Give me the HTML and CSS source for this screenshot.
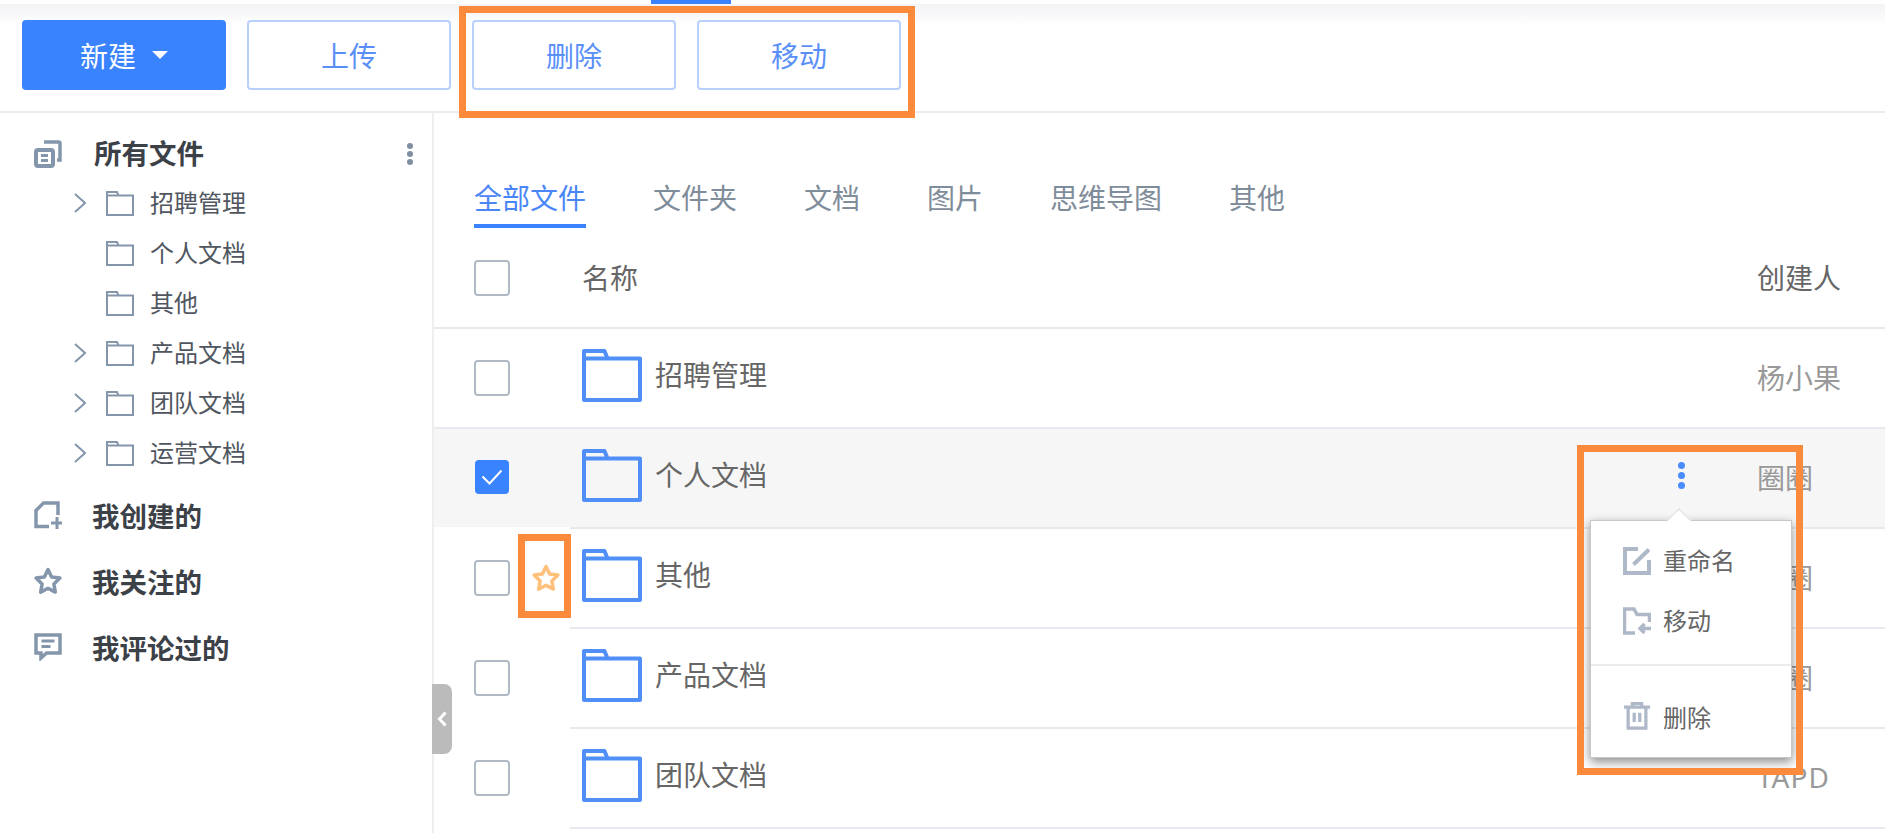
FILE: index.html
```html
<!DOCTYPE html>
<html lang="zh-CN">
<head>
  <meta charset="UTF-8">
  <title>文件</title>
  <link rel="stylesheet" href="styles.css">
</head>
<body>
  <svg class="icon-defs" width="0" height="0">
    <symbol id="folder-big" viewBox="0 0 60 53">
      <path d="M2 2h20.5l3 7.5H58V51H2zM2 9.5h24" fill="none" stroke="currentColor" stroke-width="4" stroke-linejoin="round"/>
    </symbol>
    <symbol id="folder-small" viewBox="0 0 28 25">
      <path d="M1 1h10l1.5 3.5H27V24H1zM1 4.5h12" fill="none" stroke="currentColor" stroke-width="2"/>
    </symbol>
    <symbol id="chevron" viewBox="0 0 12 20">
      <path d="M1 1l10 9-10 9" fill="none" stroke="currentColor" stroke-width="2"/>
    </symbol>
    <symbol id="star" viewBox="0 0 28 28">
      <path d="M14 2.5L17.6 10L25.9 11.1L19.9 16.9L21.3 25.1L14 21.2L6.7 25.1L8.1 16.9L2.1 11.1L10.4 10Z" fill="none" stroke="currentColor" stroke-width="3.5" stroke-linejoin="round"/>
    </symbol>
  </svg>

  <header class="toolbar">
    <span class="toolbar-tab"></span>
    <button class="btn btn-primary">新建<span class="caret"></span></button>
    <button class="btn">上传</button>
    <button class="btn">删除</button>
    <button class="btn">移动</button>
    <span class="mark mark-toolbar"></span>
  </header>

  <div class="main">
    <aside class="sidebar">
      <div class="side-row side-head">
        <svg class="side-icon" viewBox="0 0 28 28" fill="none" stroke="currentColor" stroke-width="4">
          <rect x="2" y="10" width="17" height="16" rx="2"/>
          <path d="M7 15.5h7M7 20.5h7" stroke-width="3"/>
          <path d="M10 2h14.5a1.5 1.5 0 0 1 1.5 1.5V20h-3" stroke-width="3.5"/>
        </svg>
        <span>所有文件</span>
        <span class="side-more"><i></i><i></i><i></i></span>
      </div>

      <ul class="tree">
        <li><svg class="tree-arrow"><use href="#chevron"/></svg><svg class="tree-folder"><use href="#folder-small"/></svg>招聘管理</li>
        <li><svg class="tree-folder"><use href="#folder-small"/></svg>个人文档</li>
        <li><svg class="tree-folder"><use href="#folder-small"/></svg>其他</li>
        <li><svg class="tree-arrow"><use href="#chevron"/></svg><svg class="tree-folder"><use href="#folder-small"/></svg>产品文档</li>
        <li><svg class="tree-arrow"><use href="#chevron"/></svg><svg class="tree-folder"><use href="#folder-small"/></svg>团队文档</li>
        <li><svg class="tree-arrow"><use href="#chevron"/></svg><svg class="tree-folder"><use href="#folder-small"/></svg>运营文档</li>
      </ul>

      <div class="side-links">
        <div class="side-row">
          <svg class="side-icon" viewBox="0 0 28 28" fill="none" stroke="currentColor" stroke-width="3.5">
            <path d="M24 14V2H9.5L2 9.5V25.5H15"/>
            <path d="M23 16v12M17 22h11" stroke-width="3"/>
          </svg>
          <span>我创建的</span>
        </div>
        <div class="side-row">
          <svg class="side-icon"><use href="#star"/></svg>
          <span>我关注的</span>
        </div>
        <div class="side-row">
          <svg class="side-icon" viewBox="0 0 28 28" fill="none" stroke="currentColor" stroke-width="3.5">
            <path d="M2 2H26V20H12.5L7 25V20H2Z"/>
            <path d="M7.5 8h13M7.5 13.5h9" stroke-width="3"/>
          </svg>
          <span>我评论过的</span>
        </div>
      </div>

      <span class="collapse">
        <svg width="10" height="16" viewBox="0 0 10 16"><path d="M8.5 1.5L2.5 8l6 6.5" fill="none" stroke="#fff" stroke-width="3"/></svg>
      </span>
    </aside>

    <section class="content">
      <nav class="tabs">
        <a class="tab tab-active">全部文件</a>
        <a class="tab">文件夹</a>
        <a class="tab">文档</a>
        <a class="tab">图片</a>
        <a class="tab">思维导图</a>
        <a class="tab">其他</a>
      </nav>

      <div class="table-head">
        <span class="check"></span>
        <span class="head-name">名称</span>
        <span class="head-owner">创建人</span>
      </div>

      <div class="row row-full">
        <div class="cell-check"><span class="check"></span></div>
        <div class="cell-body">
          <svg class="file-icon"><use href="#folder-big"/></svg>
          <span class="file-name">招聘管理</span>
          <span class="owner">杨小果</span>
        </div>
      </div>

      <div class="row row-active">
        <div class="cell-check">
          <span class="check check-on">
            <svg width="22" height="16" viewBox="0 0 22 16"><path d="M1.5 7.5l7 7 12-13" fill="none" stroke="#fff" stroke-width="2"/></svg>
          </span>
        </div>
        <div class="cell-body">
          <svg class="file-icon"><use href="#folder-big"/></svg>
          <span class="file-name">个人文档</span>
          <span class="kebab">
            <i></i><i></i><i></i>
            <div class="menu">
              <div class="menu-group">
                <div class="menu-item">
                  <svg class="menu-icon" viewBox="0 0 28 28" fill="none" stroke="currentColor" stroke-width="4">
                    <path d="M15 2H2V26H26V13"/>
                    <path d="M10.5 17.5L26 2.5"/>
                  </svg>
                  重命名
                </div>
                <div class="menu-item">
                  <svg class="menu-icon" viewBox="0 0 28 28" fill="none" stroke="currentColor" stroke-width="3.5">
                    <path d="M12 26H1.5V2H11L14 7.5H26.5V15"/>
                    <path d="M28 21.5H17M21.5 17L17 21.5l4.5 4.5"/>
                  </svg>
                  移动
                </div>
              </div>
              <div class="menu-group menu-group-last">
                <div class="menu-item">
                  <svg class="menu-icon menu-icon-trash" viewBox="0 0 28 30" fill="none" stroke="currentColor" stroke-width="3.5">
                    <path d="M0 5.5h28M9 5V1.500h10V5"/>
                    <path d="M4.5 5.5V28H23.500V5.5"/>
                    <path d="M11 11.5v10M17 11.5v10"/>
                  </svg>
                  删除
                </div>
              </div>
            </div>
            <span class="mark mark-menu"></span>
          </span>
          <span class="owner">圈圈</span>
        </div>
      </div>

      <div class="row">
        <div class="cell-check">
          <span class="check"></span>
          <span class="mark mark-star"><svg class="star-icon"><use href="#star"/></svg></span>
        </div>
        <div class="cell-body">
          <svg class="file-icon"><use href="#folder-big"/></svg>
          <span class="file-name">其他</span>
          <span class="owner">圈圈</span>
        </div>
      </div>

      <div class="row">
        <div class="cell-check"><span class="check"></span></div>
        <div class="cell-body">
          <svg class="file-icon"><use href="#folder-big"/></svg>
          <span class="file-name">产品文档</span>
          <span class="owner">圈圈</span>
        </div>
      </div>

      <div class="row">
        <div class="cell-check"><span class="check"></span></div>
        <div class="cell-body">
          <svg class="file-icon"><use href="#folder-big"/></svg>
          <span class="file-name">团队文档</span>
          <span class="owner owner-latin">TAPD</span>
        </div>
      </div>
    </section>
  </div>
</body>
</html>
```

FILE: styles.css
```css
* {
  box-sizing: border-box;
}

html, body {
  height: 100%;
}

body {
  margin: 0;
  overflow: hidden;
  background: #fff;
  font-family: "Noto Sans CJK SC", "Noto Sans", sans-serif;
  font-size: 28px;
  color: #666;
}

.icon-defs {
  position: absolute;
}

/* toolbar */
.toolbar {
  position: relative;
  display: flex;
  gap: 21px;
  height: 113px;
  padding: 20px 0 0 22px;
  background: linear-gradient(#fff 4px, #f2f3f5 4px, #fff 26px);
  border-bottom: 2px solid #ebebeb;
}

.toolbar-tab {
  position: absolute;
  left: 651px;
  top: 0;
  width: 80px;
  height: 4px;
  background: #3a83ff;
}

.btn {
  display: flex;
  align-items: center;
  justify-content: center;
  width: 204px;
  height: 70px;
  padding: 0;
  background: #fff;
  border: 2px solid #b8d0fb;
  border-radius: 4px;
  font-family: inherit;
  font-size: 28px;
  color: #5a8ff8;
}

.btn-primary {
  gap: 16px;
  background: #3a83ff;
  border-color: #3a83ff;
  color: #fff;
}

.caret {
  width: 0;
  height: 0;
  border-left: 8px solid transparent;
  border-right: 8px solid transparent;
  border-top: 8px solid #fff;
}

.mark {
  position: absolute;
  border: 7px solid #fb8a3c;
  z-index: 5;
}

.mark-toolbar {
  left: 459px;
  top: 6px;
  width: 456px;
  height: 112px;
}

/* sidebar */
.main {
  display: flex;
  height: 720px;
}

.sidebar {
  position: relative;
  flex: none;
  width: 434px;
  padding-top: 15px;
  border-right: 2px solid #eee;
  z-index: 1;
}

.side-row {
  display: flex;
  align-items: center;
  height: 66px;
  padding: 0 0 3px 34px;
  font-size: 27.5px;
  font-weight: 700;
  color: #3c4148;
}

.side-head {
  position: relative;
  height: 50px;
}

.side-icon {
  flex: none;
  width: 28px;
  height: 28px;
  margin-right: 30px;
  color: #8496ab;
}

.side-head .side-icon {
  margin: 5px 32px 0 0;
}

.side-more {
  position: absolute;
  left: 407px;
  top: 15px;
  display: flex;
  flex-direction: column;
  gap: 2px;
}

.side-more i {
  width: 6px;
  height: 6px;
  border-radius: 50%;
  background: #7f8fa3;
}

.tree {
  margin: 0;
  padding: 0;
  list-style: none;
}

.tree li {
  position: relative;
  display: flex;
  align-items: center;
  height: 50px;
  padding: 0 0 3px 106px;
  font-size: 24px;
  color: #505660;
}

.tree-arrow {
  position: absolute;
  left: 74px;
  top: 15px;
  width: 12px;
  height: 20px;
  color: #8496ab;
}

.tree-folder {
  flex: none;
  width: 28px;
  height: 25px;
  margin: 4px 16px 0 0;
  color: #8496ab;
}

.side-links {
  margin-top: 5px;
}

.collapse {
  position: absolute;
  left: 432px;
  top: 571px;
  display: flex;
  align-items: center;
  justify-content: center;
  width: 20px;
  height: 70px;
  background: #bbb;
  border-radius: 0 8px 8px 0;
}

/* file list */
.content {
  flex: 1;
  min-width: 0;
}

.tabs {
  display: flex;
  gap: 67px;
  margin-top: 51px;
  padding-left: 40px;
}

.tab {
  height: 64px;
  padding-top: 6px;
  line-height: 54px;
  color: #7f8c9a;
  border-bottom: 4px solid transparent;
}

.tab-active {
  color: #4a86f7;
  border-bottom-color: #3a83ff;
}

.table-head {
  display: flex;
  align-items: center;
  height: 101px;
  padding-left: 40px;
  border-bottom: 2px solid #e8e8ee;
}

.head-name {
  flex: 1;
  margin: 0 0 2px 72px;
}

.head-owner {
  width: 128px;
  margin-bottom: 2px;
}

.check {
  flex: none;
  display: flex;
  align-items: center;
  justify-content: center;
  width: 36px;
  height: 36px;
  border: 2px solid #b0bac5;
  border-radius: 4px;
}

.check-on {
  width: 34px;
  height: 34px;
  margin-left: 1px;
  background: #3a83ff;
  border: none;
}

.row {
  display: flex;
  height: 100px;
}

.cell-check {
  position: relative;
  flex: none;
  display: flex;
  align-items: center;
  width: 136px;
  padding-left: 40px;
  border-bottom: 2px solid #fff;
}

.cell-body {
  flex: 1;
  min-width: 0;
  display: flex;
  align-items: center;
  padding: 0 0 5px 12px;
  border-bottom: 2px solid #e8e8ee;
}

.row-full .cell-check {
  border-bottom-color: #e8e8ee;
}

.row-active .cell-check,
.row-active .cell-body {
  background: #f6f6f7;
  background-clip: padding-box;
}

.row-active .cell-check {
  padding-bottom: 2px;
}

.file-icon {
  flex: none;
  width: 60px;
  height: 53px;
  margin-right: 13px;
  color: #4f8ff7;
}

.file-name {
  flex: 1;
  margin-bottom: 4px;
}

.owner {
  flex: none;
  width: 128px;
  margin-top: 3px;
  font-family: "Noto Sans", "Noto Sans CJK SC", sans-serif;
  color: #999;
}

.owner-latin {
  letter-spacing: 1px;
}

.mark-star {
  left: 84px;
  top: 5px;
  display: flex;
  align-items: center;
  justify-content: center;
  width: 53px;
  height: 84px;
  padding: 4px 0 0 3px;
}

.star-icon {
  width: 28px;
  height: 28px;
  color: #ffc07c;
}

/* row menu */
.kebab {
  position: relative;
  flex: none;
  display: flex;
  flex-direction: column;
  gap: 3px;
  width: 7px;
  margin-right: 72px;
}

.kebab i {
  width: 7px;
  height: 7px;
  border-radius: 50%;
  background: #4a8bff;
}

.menu {
  position: absolute;
  left: -88px;
  top: 58px;
  width: 202px;
  height: 238px;
  background: #fff;
  border: 1px solid #c8c8c8;
  box-shadow: 0 4px 10px rgba(0, 0, 0, 0.45);
  font-size: 24px;
  z-index: 3;
}

.menu::before {
  content: "";
  position: absolute;
  left: 79px;
  top: -9px;
  width: 17px;
  height: 17px;
  background: #fff;
  border-top: 1px solid #ddd;
  border-left: 1px solid #ddd;
  transform: rotate(45deg);
}

.menu-group {
  padding-top: 8px;
  height: 145px;
  border-bottom: 2px solid #ebebef;
}

.menu-group-last {
  height: auto;
  border-bottom: none;
  padding-top: 20px;
}

.menu-item {
  display: flex;
  align-items: center;
  height: 60px;
  padding-left: 32px;
  color: #666;
}

.menu-icon {
  flex: none;
  width: 28px;
  height: 28px;
  margin: 4px 12px 0 0;
  color: #aeb8c8;
}

.menu-icon-trash {
  margin-top: 0;
}

.mark-menu {
  left: -101px;
  top: -17px;
  width: 226px;
  height: 330px;
}
```
